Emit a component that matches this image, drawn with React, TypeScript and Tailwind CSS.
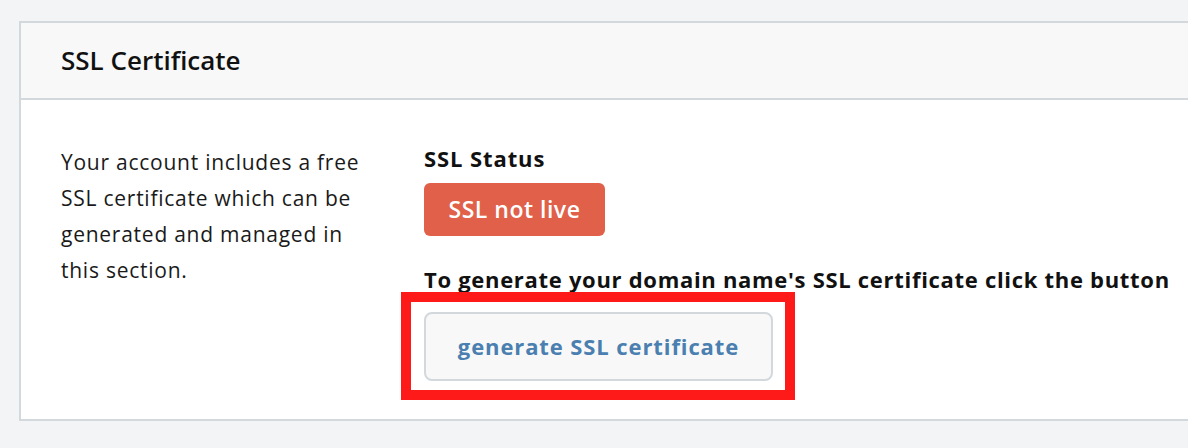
export default function App() {
  return (
    <div
      className="min-h-[448px] w-full overflow-hidden bg-[#f3f4f6] pl-[19px] pt-[21px]"
      style={{ fontFamily: "'Open Sans', sans-serif" }}
    >
      <div className="w-[1200px] border-2 border-[#d3d8dd] bg-white">
        <div className="flex h-[77px] items-center border-b-2 border-[#d3d8dd] bg-[#f8f8f8] pl-[40px]">
          <h2 className="text-[26px] font-semibold text-[#111]">SSL Certificate</h2>
        </div>

        <div className="flex pl-[40px] pt-[44px] pb-[38px]">
          <p className="w-[310px] text-[21px] leading-[36px] tracking-[0.75px] text-[#1a1a1a]">
            Your account includes a free SSL certificate which can be generated and managed in
            this section.
          </p>

          <div className="ml-[53px] flex flex-col items-start">
            <h3 className="text-[22px] font-bold leading-[28px] tracking-[0.9px] text-[#111]">
              SSL Status
            </h3>
            <span className="mt-[11px] inline-flex h-[53px] w-[181px] items-center justify-center rounded-[6px] bg-[#e0604a] text-[23px] font-semibold tracking-[0.5px] text-white">
              SSL not live
            </span>

            <p className="mt-[29px] text-[22px] font-bold leading-[28px] tracking-[0.7px] text-[#111]">
              To generate your domain name's SSL certificate click the button
            </p>

            <div className="relative mt-[19px]">
              <button className="h-[69px] w-[349px] rounded-[8px] border-2 border-[#d3d8dd] bg-[#f8f8f8] text-[22px] font-bold tracking-[0.9px] text-[#4a7fb0]">
                generate SSL certificate
              </button>
              <span className="pointer-events-none absolute -top-[20px] -right-[22px] -bottom-[19px] -left-[23px] border-[10px] border-[#ff1a1a]" />
            </div>
          </div>
        </div>
      </div>
    </div>
  );
}
